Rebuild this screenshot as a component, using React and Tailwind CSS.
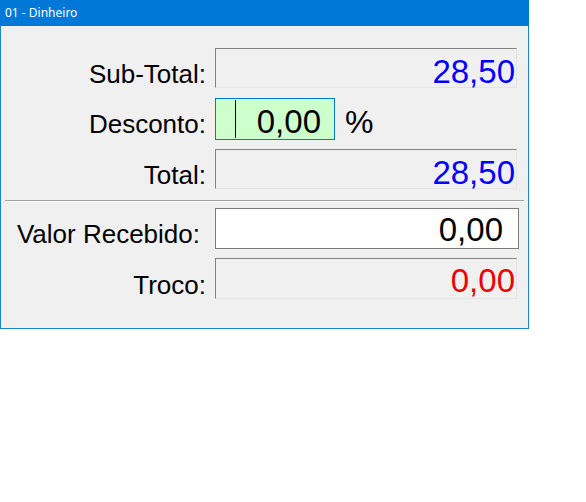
import React from 'react';

const arial = { fontFamily: '"Liberation Sans", Arial, sans-serif' };

const Label = ({ children, top = 'mt-[13px]', pr = '' }) => (
  <div className={`w-[205px] shrink-0 text-right text-[26px] leading-[26px] text-black ${top} ${pr}`}>
    {children}
  </div>
);

const ReadOnlyBox = ({ value, color, pad = 'pt-[6px]', h = 'h-[40px]' }) => (
  <div
    className={`w-[302px] ${h} ${pad} pr-[1px] border border-t-[#828282] border-l-[#828282] border-b-[#e3e3e3] border-r-[#e3e3e3] bg-[#f0f0f0] text-right text-[33px] leading-[33px] ${color}`}
  >
    {value}
  </div>
);

export default function App() {
  return (
    <div className="w-[586px] h-[502px] bg-white" style={arial}>
      <div className="w-[529px] flex flex-col">
        {/* Title bar */}
        <div className="h-[26px] bg-[#0078d7] flex items-center px-[5px]">
          <span
            className="text-white text-[12px] leading-none"
            style={{ fontFamily: '"Noto Sans", "Open Sans", sans-serif' }}
          >
            01 - Dinheiro
          </span>
        </div>

        {/* Body */}
        <div className="h-[303px] bg-[#f0f0f0] border-x border-b border-[#1883d7] flex flex-col pt-[22px]">
          {/* Sub-Total */}
          <div className="flex items-start gap-[9px]">
            <Label>Sub-Total:</Label>
            <ReadOnlyBox value="28,50" color="text-[#0000ff]" />
          </div>

          {/* Desconto */}
          <div className="flex items-start gap-[9px] mt-[10px]">
            <Label>Desconto:</Label>
            <div className="w-[120px] h-[42px] border border-[#0078d7] bg-[#ccffcc] flex items-start justify-between">
              <div className="ml-[19px] mt-[1px] w-px h-[38px] bg-black" />
              <div className="pt-[6px] pr-[13px] text-[33px] leading-[33px] text-black">0,00</div>
            </div>
            <div className="ml-[1px] pt-[8px] text-[32px] leading-[32px] text-black">%</div>
          </div>

          {/* Total */}
          <div className="flex items-start gap-[9px] mt-[9px]">
            <Label>Total:</Label>
            <ReadOnlyBox value="28,50" color="text-[#0000ff]" />
          </div>

          {/* Separator */}
          <div className="mt-[11px] mx-[4px] border-t border-t-[#a0a0a0] border-b border-b-white" />

          {/* Valor Recebido */}
          <div className="flex items-start gap-[9px] mt-[6px]">
            <Label top="mt-[13px]" pr="pr-[6px]">Valor Recebido:</Label>
            <div className="w-[304px] h-[41px] pt-[4px] pr-[15px] border border-[#7a7a7a] bg-white text-right text-[33px] leading-[33px] text-black">
              0,00
            </div>
          </div>

          {/* Troco */}
          <div className="flex items-start gap-[9px] mt-[9px]">
            <Label top="mt-[14px]">Troco:</Label>
            <ReadOnlyBox value="0,00" color="text-[#ee0000]" pad="pt-[5px]" h="h-[41px]" />
          </div>
        </div>
      </div>
    </div>
  );
}
